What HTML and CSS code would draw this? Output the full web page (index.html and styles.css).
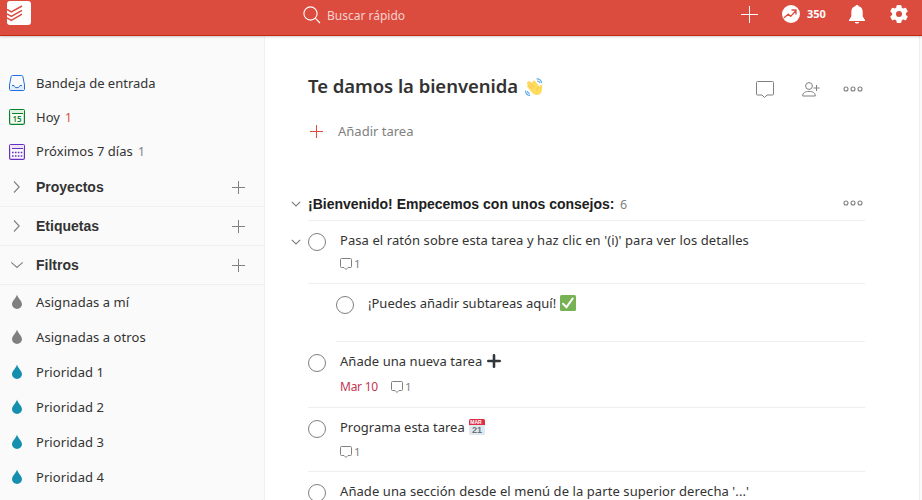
FILE: index.html
```html
<!DOCTYPE html>
<html lang="es">
<head>
<meta charset="utf-8">
<title>Te damos la bienvenida</title>
<link rel="stylesheet" href="styles.css">
</head>
<body>
<svg width="0" height="0" class="defs">
  <symbol id="plus" viewBox="0 0 13 13"><path d="M6.500 0v13M0 6.500h13" fill="none" stroke="currentColor"/></symbol>
  <symbol id="drop" viewBox="0 0 12 16"><path d="M6 .5C5.300 4 1 6.800 1 10.200a5 4.800 0 0 0 10 0C11 6.800 6.700 4 6 .5z" fill="currentColor"/></symbol>
  <symbol id="right" viewBox="0 0 14 14"><path d="M4 1.500l5.200 5.500L4 12.500" fill="none" stroke="currentColor" stroke-width="1.100"/></symbol>
  <symbol id="down" viewBox="0 0 14 14"><path d="M1.300 4.300L7 9.500l5.700-5.200" fill="none" stroke="currentColor" stroke-width="1.100"/></symbol>
  <symbol id="fold" viewBox="0 0 10 6"><path d="M.8.8L5 5 9.200.8" fill="none" stroke="currentColor" stroke-width="1.200"/></symbol>
  <symbol id="note" viewBox="0 0 12 12"><path d="M1.500.5h9a1 1 0 0 1 1 1v7a1 1 0 0 1-1 1H8l-2 2-2-2H1.500a1 1 0 0 1-1-1v-7a1 1 0 0 1 1-1z" fill="none" stroke="currentColor"/></symbol>
  <symbol id="dots" viewBox="0 0 20 6"><g fill="none" stroke="currentColor" stroke-width="1.100"><circle cx="3" cy="3" r="2"/><circle cx="10" cy="3" r="2"/><circle cx="17" cy="3" r="2"/></g></symbol>
</svg>
<header class="topbar">
  <svg class="logo" viewBox="0 0 24 24"><rect width="24" height="24" rx="3" fill="#fff"/><g fill="none" stroke="#db4c3f" stroke-width="1.500"><path d="M0 8.500l4.300 2.500L15 5"/><path d="M0 13l4.300 2.500L15 9.300"/><path d="M0 17l4.300 2.300L15 13.200"/></g></svg>
  <div class="search">
    <svg width="18" height="18" viewBox="0 0 18 18" fill="none" stroke="#fff" stroke-width="1.100"><circle cx="7.500" cy="7.500" r="6.600"/><path d="M12.200 12.200l4.800 4.800"/></svg>
    <span class="search-text">Buscar rápido</span>
  </div>
  <div class="tools">
    <svg width="17" height="17" viewBox="0 0 17 17"><path d="M8.500 0v17M0 8.500h17" stroke="#fff"/></svg>
    <svg class="karma" width="18" height="18" viewBox="0 0 18 18"><circle cx="9" cy="9" r="9" fill="#fff"/><path d="M2 12.800l4.300-3.600 2.400 2.200L14 5.500M9.500 5H14v4.500" fill="none" stroke="#db4c3f" stroke-width="1.300"/></svg>
    <b class="score">350</b>
    <svg class="bell" width="16" height="19" viewBox="0 0 16 19" fill="#fff"><path d="M8 0c-1.100 0-1.500.7-1.700 1.300C3.500 2 2.300 4 2.300 7v4.500L0 15v1h16v-1l-2.300-3.500V7c0-3-1.200-5-4-5.700C9.500.7 9.100 0 8 0zM5.700 17c.5 1.200 1.300 1.600 2.300 1.600s1.800-.4 2.300-1.600z"/></svg>
    <svg class="gear" width="18" height="18" viewBox="0 0 18 18"><g fill="#fff"><circle cx="9" cy="9" r="7"/><rect x="6.500" width="5" height="18" rx="1.200"/><rect x="6.500" width="5" height="18" rx="1.200" transform="rotate(60 9 9)"/><rect x="6.500" width="5" height="18" rx="1.200" transform="rotate(120 9 9)"/></g><circle cx="9" cy="9" r="3" fill="#db4c3f"/></svg>
  </div>
</header>
<div class="layout">
  <nav class="sidebar">
    <div class="item"><svg class="ico" viewBox="0 0 16 16" fill="none" stroke="#246fe0"><path d="M3.500.5h9c.8 0 1.200.4 1.400 1.200l1.600 8.300v4c0 1-.5 1.500-1.500 1.500H2c-1 0-1.500-.5-1.500-1.500v-4L2.100 1.700C2.300.9 2.700.5 3.500.5z"/><path d="M1 10.500h4c.3 1.300 1.500 2.200 3 2.200s2.700-.9 3-2.200h4V15H1z" fill="#e3ecfb" stroke="none"/><path d="M3 10.500h2c.3 1.300 1.500 2.200 3 2.200s2.700-.9 3-2.200h2"/></svg><span>Bandeja de entrada</span></div>
    <div class="item"><svg class="ico" viewBox="0 0 16 16"><rect x=".6" y=".6" width="14.800" height="14.800" rx="1.500" fill="#fafafa" stroke="#058527" stroke-width="1.200"/><path d="M1 1h14v3H1z" fill="#e0f0e4"/><path d="M3 4.500h11" stroke="#058527"/><text x="8" y="13" class="day">15</text></svg><span>Hoy</span><span class="num due">1</span></div>
    <div class="item"><svg class="ico cal" viewBox="0 0 16 16"><rect x=".6" y=".6" width="14.800" height="14.800" rx="1.500" fill="#fafafa" stroke="#692fc2" stroke-width="1.200"/><path d="M1 1h14v3H1z" fill="#ede5f8"/><path d="M3 4.500h11" stroke="#692fc2"/><path d="M3 8.500h10.500M3 12h10.500" stroke="#692fc2" stroke-width="1.600" stroke-dasharray="1.600 1.300"/></svg><span class="week">Próximos 7 días</span><span class="num">1</span></div>
    <div class="group"><svg class="arrow"><use href="#right"/></svg><b>Proyectos</b><svg class="add"><use href="#plus"/></svg></div>
    <div class="group"><svg class="arrow"><use href="#right"/></svg><b>Etiquetas</b><svg class="add"><use href="#plus"/></svg></div>
    <div class="group"><svg class="arrow"><use href="#down"/></svg><b>Filtros</b><svg class="add"><use href="#plus"/></svg></div>
    <div class="filter"><svg class="drop gray"><use href="#drop"/></svg><span>Asignadas a mí</span></div>
    <div class="filter"><svg class="drop gray"><use href="#drop"/></svg><span>Asignadas a otros</span></div>
    <div class="filter"><svg class="drop"><use href="#drop"/></svg><span>Prioridad 1</span></div>
    <div class="filter"><svg class="drop"><use href="#drop"/></svg><span>Prioridad 2</span></div>
    <div class="filter"><svg class="drop"><use href="#drop"/></svg><span>Prioridad 3</span></div>
    <div class="filter"><svg class="drop"><use href="#drop"/></svg><span>Prioridad 4</span></div>
  </nav>
  <main class="content">
    <div class="title-row">
      <h1>Te damos la bienvenida</h1>
      <svg class="wave" width="18" height="18" viewBox="0 0 18 18"><path d="M3 3.500c.8-.9 1.800-.4 2.300.3l1.200 1.400L8 3c1-.9 2-.3 2.600.5l4.300 5.700.4-2c1.200-1 2.100 0 1.900 1.300-.3 3 .2 5-1.800 6.900-2.700 2.300-6 2-8.500-.8L2.500 9.300c-.7-1-.3-1.800.3-2.100L2 5.500c-.1-.9.300-1.700 1-2z" fill="#ffdc5d"/><path d="M3.500 7l4 4.500M4.700 4l4.600 5.500M14.500 9c-2.200.8-3 2.200-2.700 3.800" fill="none" stroke="#f0b050" stroke-width=".6"/><path d="M11.500 1c2.800-.4 5 1.400 5.200 4M12 3c1.500 0 2.500.8 3 2M.5 12.500c0 2.800 1.500 4.700 4.500 5M2.500 13c0 1.400.8 2.300 2.200 2.600" fill="none" stroke="#5dadec" stroke-width="1.200"/></svg>
      <div class="actions">
        <svg class="talk" width="18" height="18" viewBox="0 0 18 18" fill="none" stroke="#808080"><path d="M1.500.5h15a1 1 0 0 1 1 1v11.500a1 1 0 0 1-1 1H11L8.500 16.500 6 14H1.500a1 1 0 0 1-1-1V1.500a1 1 0 0 1 1-1z"/></svg>
        <svg class="person" width="18" height="15" viewBox="0 0 18 15" fill="none" stroke="#808080"><circle cx="7" cy="4" r="3.400"/><path d="M.7 14c0-3.300 2.500-4.600 6.300-4.600s6.300 1.300 6.300 4.600zM14.500 3v6M11.500 6h6"/></svg>
        <svg class="dots"><use href="#dots"/></svg>
      </div>
    </div>
    <div class="add-task"><svg class="add"><use href="#plus"/></svg><span>Añadir tarea</span></div>
    <div class="section"><svg class="fold"><use href="#fold"/></svg><b>¡Bienvenido! Empecemos con unos consejos:</b><span class="count">6</span><svg class="dots"><use href="#dots"/></svg></div>
    <div class="task t1"><svg class="fold"><use href="#fold"/></svg><i class="check"></i><div><p class="long">Pasa el ratón sobre esta tarea y haz clic en '(i)' para ver los detalles</p><div class="meta"><svg class="note"><use href="#note"/></svg>1</div></div></div>
    <div class="task sub"><i class="check"></i><div><p><span>¡Puedes añadir subtareas aquí!</span><svg class="emoji" width="16" height="16" viewBox="0 0 16 16"><rect width="16" height="16" rx="1.500" fill="#77b255"/><path d="M3 8.700l3.500 3.500L12.700 3.500" fill="none" stroke="#fff" stroke-width="2" stroke-linecap="round"/></svg></p></div></div>
    <div class="task t3"><i class="check"></i><div><p><span class="new">Añade una nueva tarea</span><svg class="emoji" width="16" height="16" viewBox="0 0 16 16"><path d="M8 2.300v11.400M2.300 8h11.400" stroke="#31373d" stroke-width="2.600" stroke-linecap="round"/></svg></p><div class="meta"><span class="date">Mar 10</span><svg class="note"><use href="#note"/></svg>1</div></div></div>
    <div class="task t4"><i class="check"></i><div><p><span>Programa esta tarea</span><svg class="emoji" width="16" height="16" viewBox="0 0 16 16"><rect width="16" height="16" rx="1.500" fill="#e1e8ed"/><path d="M0 6V1.500Q0 0 1.500 0h13Q16 0 16 1.500V6z" fill="#dd2e44"/><text x="7" y="4.800" class="cal-month">MAR</text><text x="8" y="14.300" class="cal-day">21</text></svg></p><div class="meta"><svg class="note"><use href="#note"/></svg>1</div></div></div>
    <div class="task"><i class="check"></i><div><p class="long">Añade una sección desde el menú de la parte superior derecha '...'</p></div></div>
  </main>
  <div class="edge"></div>
</div>
</body>
</html>
```
FILE: styles.css
```css
* { box-sizing: border-box; }
body { margin: 0; height: 500px; overflow: hidden; background: #fff; color: #333; font: 13px/18px "Noto Sans", sans-serif; }
svg { display: block; flex: none; }
p, h1 { margin: 0; white-space: nowrap; }
span, b { white-space: nowrap; }
.defs { height: 0; }
.topbar { position: relative; z-index: 1; display: flex; height: 36px; background: #db4c3f; border-bottom: 1px solid #c22b12; box-shadow: 0 1px 2px rgba(0,0,0,.2); color: #fff; }
.logo { width: 24px; height: 24px; margin: 1px 0 0 7px; }
.search { display: flex; margin: 6px 0 0 272px; gap: 6px; height: 18px; }
.search-text { margin-top: 1px; color: #f8d2ce; font-size: 12px; }
.tools { display: flex; align-items: center; height: 28px; margin-left: auto; padding-right: 14px; }
.karma { margin-left: 24px; }
.score { width: 20px; margin-left: 7px; font-size: 11px; }
.bell { margin-left: 22px; }
.gear { margin-left: 25px; }
.layout { display: flex; height: 464px; }
.sidebar { width: 265px; padding-top: 30px; background: #fafafa; border-right: 1px solid #f1f1f1; flex: none; overflow: hidden; }
.item { display: flex; height: 34px; align-items: center; padding-left: 9px; }
.ico { width: 16px; height: 16px; margin-right: 11px; }
.cal { margin-top: 1px; }
.week { letter-spacing: .05px; }
.day { font: 600 8px "Noto Sans", sans-serif; fill: #058527; text-anchor: middle; }
.num { margin: 1px 0 0 5px; color: #808080; font-size: 12px; }
.due { color: #db4c3f; }
.group { display: flex; align-items: center; height: 39px; padding: 0 19px 0 10px; border-bottom: 1px solid #f0f0f0; font: bold 14px/18px "Liberation Sans", sans-serif; }
.arrow { width: 14px; height: 14px; margin-right: 12px; color: #808080; }
.add { width: 13px; height: 13px; color: #808080; }
.group .add { margin-left: auto; }
.filter { display: flex; align-items: center; height: 35px; padding: 0 0 2px 11px; letter-spacing: .07px; }
.drop { width: 12px; height: 16px; margin-right: 13px; color: #158fad; }
.gray { color: #808080; }
.content { width: 557px; margin-left: 43px; flex: none; }
.title-row { display: flex; align-items: center; height: 34px; margin-top: 34px; }
h1 { font: 600 18.500px/28px "Noto Sans", sans-serif; letter-spacing: -.05px; width: 212px; margin-top: -2px; }
.wave { margin-left: 5px; }
.actions { display: flex; align-items: center; margin-left: auto; padding-right: 2px; margin-top: 4px; }
.talk { margin-top: 2px; }
.person { margin: 0 23px 0 28px; }
.dots { width: 20px; height: 6px; color: #808080; }
.add-task { display: flex; align-items: center; height: 20px; margin-top: 17px; padding-left: 2px; gap: 15px; color: #808080; }
.add-task .add { color: #db4c3f; }
.section { position: relative; display: flex; align-items: center; height: 33px; margin-top: 47px; border-bottom: 1px solid #eee; font: 14px/18px "Liberation Sans", sans-serif; color: #202020; }
.section b { width: 306px; }
.count { margin-left: 6px; color: #808080; font: 12.500px "Noto Sans", sans-serif; }
.section .dots { margin: -2px 2px 0 auto; }
.fold { position: absolute; left: -17px; width: 10px; height: 6px; color: #808080; }
.task { position: relative; display: flex; gap: 14px; padding-top: 10px; border-bottom: 1px solid #eee; }
.task .fold { top: 18px; }
.check { width: 18px; height: 18px; margin-top: 2px; border: 1px solid #808080; border-radius: 50%; flex: none; }
.task p { display: flex; height: 18px; }
.long { letter-spacing: .08px; }
.new { letter-spacing: .05px; }
.emoji { margin: 1px 0 0 4px; }
.meta { display: flex; align-items: center; gap: 2px; margin-top: 6px; height: 18px; color: #808080; font-size: 11.500px; }
.note { width: 12px; height: 12px; }
.date { color: #c53652; font-size: 12px; letter-spacing: -.25px; width: 38px; margin-right: 11px; }
.t1 { height: 63px; }
.sub { height: 58px; margin-left: 28px; }
.t3 { height: 66px; }
.t3 .meta { margin-top: 8px; }
.t4 { height: 64px; }
.t4 .meta { margin-top: 7px; }
.cal-month { font: bold 5px "Liberation Sans", sans-serif; fill: #fff; text-anchor: middle; }
.cal-day { font: bold 9px "Liberation Sans", sans-serif; fill: #66757f; text-anchor: middle; }
.edge { margin-left: auto; width: 3px; background: #fafafa; border-left: 1px solid #eee; }
```
